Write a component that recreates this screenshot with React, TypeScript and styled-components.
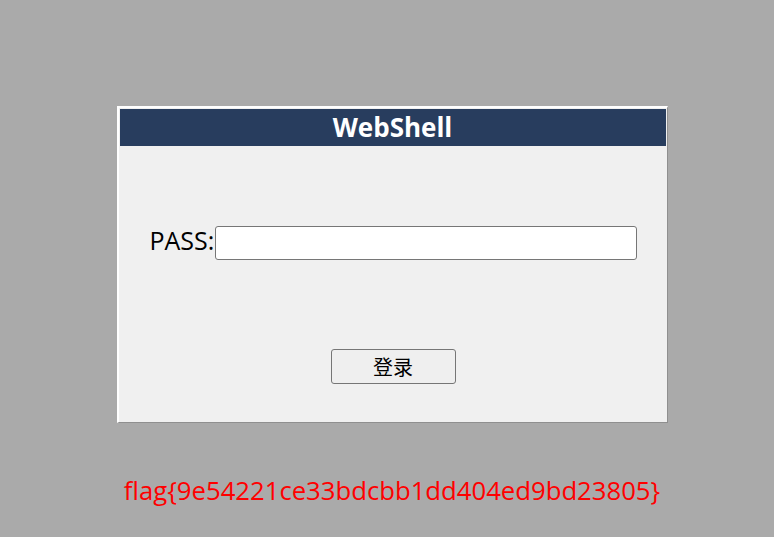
import React from "react";
import styled, { createGlobalStyle } from "styled-components";

const Global = createGlobalStyle`
  html, body { margin: 0; padding: 0; background: #aaaaaa; }
  body { font-family: "Open Sans", "Noto Sans", "Noto Sans CJK SC", sans-serif; }
`;

const Page = styled.div`
  display: flex;
  flex-direction: column;
  align-items: center;
  padding: 106px 0 0 10px;
  min-height: 537px;
  box-sizing: border-box;
`;

const Panel = styled.div`
  width: 551px;
  height: 317px;
  box-sizing: border-box;
  border-style: solid;
  border-width: 2px 1px 1px 2px;
  border-color: #ffffff #8f8f8f #8f8f8f #ffffff;
  background: #f0f0f0;
  padding: 1px;
  display: flex;
  flex-direction: column;
`;

const Header = styled.div`
  height: 37px;
  background: #283d5e;
  color: #ffffff;
  font-weight: 700;
  font-size: 26px;
  line-height: 37px;
  text-align: center;
`;

const Row = styled.div`
  display: flex;
  align-items: center;
  margin: 80px 0 0 30px;
`;

const Label = styled.span`
  font-size: 25px;
  color: #000;
  line-height: 29px;
  align-self: flex-start;
`;

const Input = styled.input`
  width: 422px;
  height: 34px;
  box-sizing: border-box;
  border: 1px solid #767676;
  border-radius: 3px;
  background: #fff;
  margin-left: 1px;
`;

const Actions = styled.div`
  display: flex;
  justify-content: center;
  margin-top: 89px;
`;

const Button = styled.button`
  width: 125px;
  height: 35px;
  box-sizing: border-box;
  border: 1px solid #767676;
  border-radius: 3px;
  background: #efefef;
  font-family: "Noto Sans CJK SC", sans-serif;
  font-size: 20px;
  color: #000;
  padding: 0;
  margin-left: 1px;
`;

const Flag = styled.div`
  margin-top: 50px;
  color: #ff0000;
  font-size: 25.7px;
`;

export default function App() {
  return (
    <>
      <Global />
      <Page>
        <Panel>
          <Header>WebShell</Header>
          <Row>
            <Label>PASS:</Label>
            <Input type="password" />
          </Row>
          <Actions>
            <Button>登录</Button>
          </Actions>
        </Panel>
        <Flag>flag{"{"}9e54221ce33bdcbb1dd404ed9bd23805{"}"}</Flag>
      </Page>
    </>
  );
}
